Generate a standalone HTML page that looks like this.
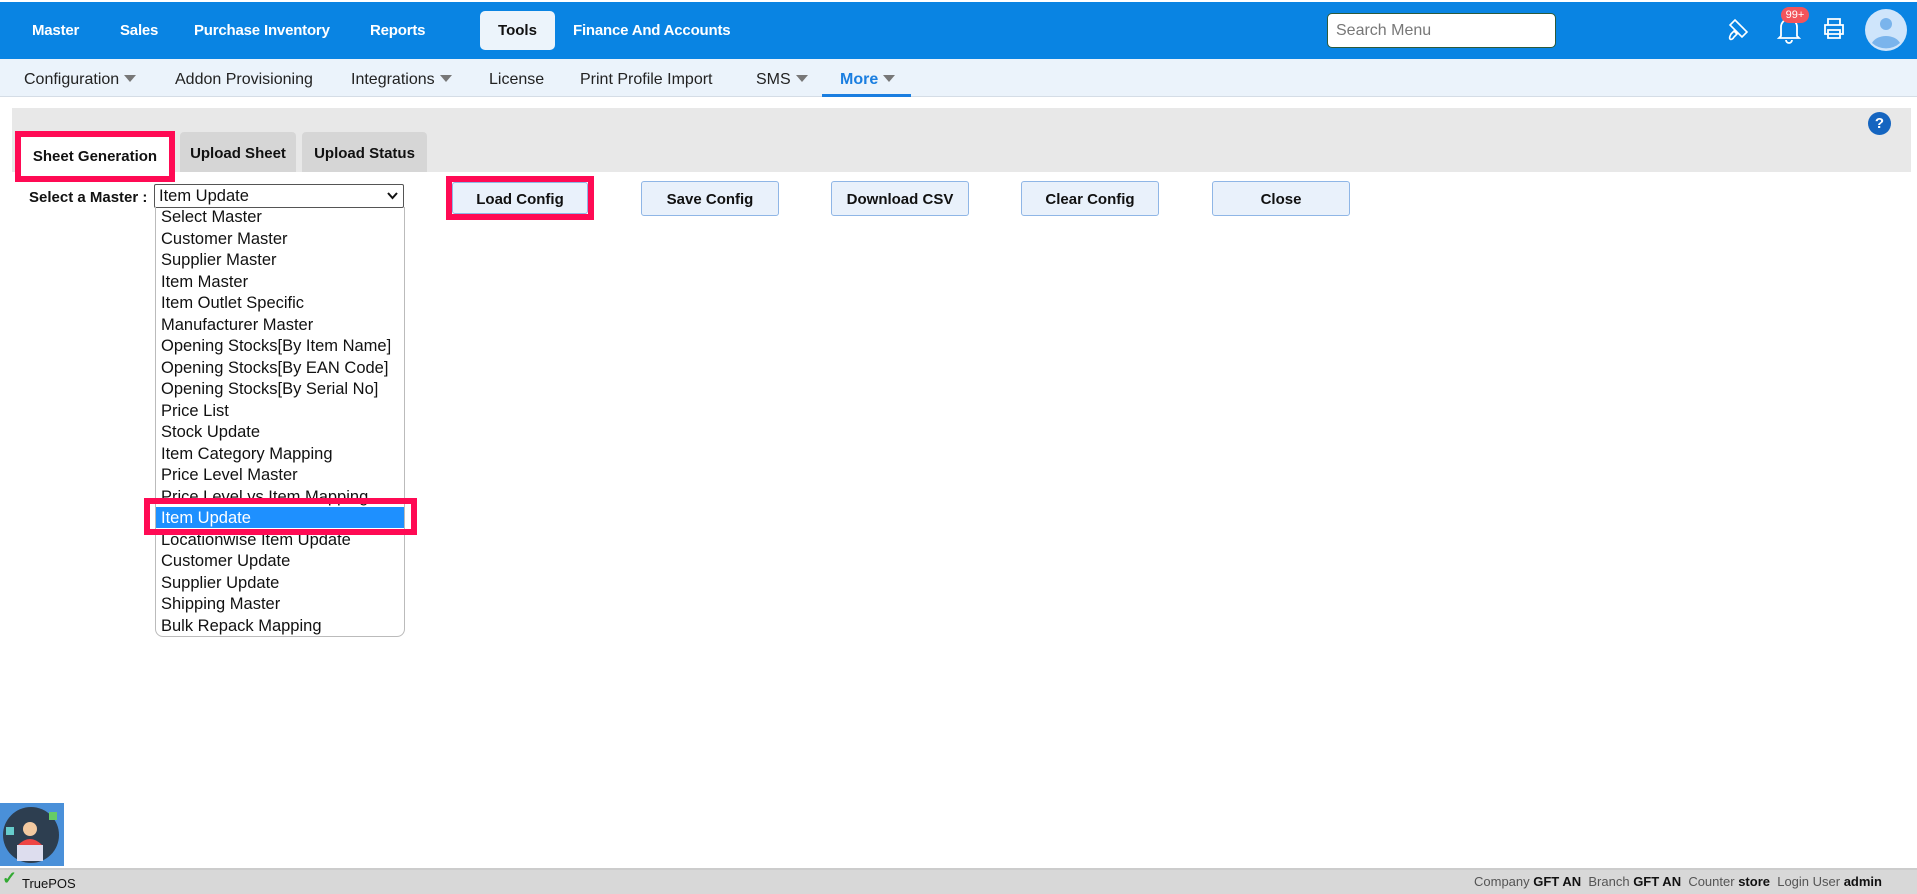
<!DOCTYPE html>
<html><head><meta charset="utf-8"><style>
*{box-sizing:border-box;margin:0;padding:0}
body{width:1917px;height:894px;position:relative;overflow:hidden;background:#fff;font-family:"Liberation Sans",sans-serif;color:#222}
.a{position:absolute}
.top{left:0;top:2px;width:1917px;height:57px;background:#0984e3}
.nav{top:22px;color:#fff;font-weight:bold;font-size:15px;letter-spacing:-0.2px}
.sub{left:0;top:59px;width:1917px;height:38px;background:#ebf3fb;border-bottom:1px solid #d5dde6}
.si{top:71px;font-size:16px;color:#222}
.car{display:inline-block;width:0;height:0;border-left:6px solid transparent;border-right:6px solid transparent;border-top:7px solid #777;margin-left:5px;vertical-align:2px}
.btn{height:35px;background:#e9f1fb;border:1px solid #8fb6e6;border-radius:3px;font-weight:bold;font-size:15px;text-align:center;line-height:35px;color:#111}
.pink{border:6px solid #ff0a54}
.li{left:161px;font-size:16.5px;color:#111;line-height:21.5px}
</style></head><body>
<div class="a top"></div>
<div class="a nav" style="left:32px">Master</div>
<div class="a nav" style="left:120px">Sales</div>
<div class="a nav" style="left:194px">Purchase</div>
<div class="a nav" style="left:264px">Inventory</div>
<div class="a nav" style="left:370px">Reports</div>
<div class="a" style="left:480px;top:11px;width:75px;height:39px;background:#ecf4fb;border-radius:5px;color:#111;font-weight:bold;font-size:15px;text-align:center;line-height:39px">Tools</div>
<div class="a nav" style="left:573px">Finance And Accounts</div>
<div class="a" style="left:1327px;top:13px;width:229px;height:35px;background:#fff;border:1px solid #2d5a3a;border-radius:5px;font-size:16px;color:#777;padding:8px 8px">Search Menu</div>
<svg class="a" style="left:1723px;top:14px" width="30" height="30" viewBox="0 0 30 30" fill="none" stroke="#fff" stroke-width="1.6"><path d="M12 6l12 12-5 5L7 11z M8 20l3-3 3 3-3 3c-1 2-3 3-4 2s0-3 1-5z M16 10l2 2 M19 13l2 2"/></svg>
<svg class="a" style="left:1775px;top:14px" width="28" height="30" viewBox="0 0 28 30" fill="none" stroke="#fff" stroke-width="1.8"><path d="M6 22V13a8 8 0 0 1 16 0v9l2 2H4z M11 26a3 3 0 0 0 6 0"/></svg>
<div class="a" style="left:1781px;top:7px;width:28px;height:16px;background:#f2545b;border-radius:8px;color:#fff;font-size:11px;text-align:center;line-height:16px">99+</div>
<svg class="a" style="left:1821px;top:16px" width="26" height="26" viewBox="0 0 26 26" fill="none" stroke="#fff" stroke-width="1.8"><path d="M7 9V3h12v6 M4 9h18v9H4z M7 14h12v8H7z"/></svg>
<svg class="a" style="left:1865px;top:9px" width="42" height="42" viewBox="0 0 42 42"><circle cx="21" cy="21" r="21" fill="#cfe5fb"/><circle cx="21" cy="15" r="6" fill="#7ab4ec"/><path d="M7 34a15 11 0 0 1 28 0a21 21 0 0 1-28 0z" fill="#7ab4ec"/></svg>
<div class="a sub"></div>
<div class="a si" style="left:24px">Configuration<span class="car"></span></div>
<div class="a si" style="left:175px">Addon Provisioning</div>
<div class="a si" style="left:351px">Integrations<span class="car"></span></div>
<div class="a si" style="left:489px">License</div>
<div class="a si" style="left:580px">Print Profile Import</div>
<div class="a si" style="left:756px">SMS<span class="car"></span></div>
<div class="a si" style="left:840px;color:#1a7ee0;font-weight:bold">More<span class="car"></span></div>
<div class="a" style="left:822px;top:94px;width:89px;height:3px;background:#1a7ee0"></div>
<div class="a" style="left:12px;top:108px;width:1899px;height:64px;background:#e8e8e8"></div>
<div class="a" style="left:1868px;top:112px;width:23px;height:23px;border-radius:50%;background:#1565c0;color:#fff;font-weight:bold;font-size:15px;text-align:center;line-height:23px">?</div>
<div class="a" style="left:180px;top:132px;width:116px;height:40px;background:#d6d6d6;border-radius:4px 4px 0 0;font-weight:bold;font-size:15px;text-align:center;line-height:44px;color:#111">Upload Sheet</div>
<div class="a" style="left:302px;top:132px;width:125px;height:40px;background:#d6d6d6;border-radius:4px 4px 0 0;font-weight:bold;font-size:15px;text-align:center;line-height:44px;color:#111">Upload Status</div>
<div class="a pink" style="left:15px;top:131px;width:160px;height:51px;background:#fff;font-weight:bold;font-size:15px;text-align:center;line-height:40px;color:#111">Sheet Generation</div>
<div class="a" style="left:29px;top:189px;font-weight:bold;font-size:15px;color:#111">Select a Master :</div>
<div class="a" style="left:154px;top:184px;width:250px;height:24px;border:1px solid #555;border-radius:2px;font-size:16.5px;padding:2px 4px;color:#111">Item Update<svg style="position:absolute;right:5px;top:7px" width="11" height="8" viewBox="0 0 11 8"><path d="M1 1l4.5 5L10 1" fill="none" stroke="#111" stroke-width="2"/></svg></div>
<div class="a pink" style="left:446px;top:176px;width:148px;height:44px"></div>
<div class="a btn" style="left:452px;top:182px;width:136px;height:32px;line-height:34px">Load Config</div>
<div class="a btn" style="left:641px;top:181px;width:138px">Save Config</div>
<div class="a btn" style="left:831px;top:181px;width:138px">Download CSV</div>
<div class="a btn" style="left:1021px;top:181px;width:138px">Clear Config</div>
<div class="a btn" style="left:1212px;top:181px;width:138px">Close</div>
<div class="a" style="left:155px;top:207px;width:250px;height:430px;border:1px solid #bbb;border-top:none;border-radius:0 0 8px 8px"></div>
<div class="a" style="left:156px;top:507px;width:248px;height:21px;background:#1e90ff"></div>
<div class="a li" style="top:207px">Select Master<br>Customer Master<br>Supplier Master<br>Item Master<br>Item Outlet Specific<br>Manufacturer Master<br>Opening Stocks[By Item Name]<br>Opening Stocks[By EAN Code]<br>Opening Stocks[By Serial No]<br>Price List<br>Stock Update<br>Item Category Mapping<br>Price Level Master<br>Price Level vs Item Mapping<br><span style="color:#fff">Item Update</span><br>Locationwise Item Update<br>Customer Update<br>Supplier Update<br>Shipping Master<br>Bulk Repack Mapping</div>
<div class="a pink" style="left:144px;top:498px;width:273px;height:37px;border-width:6px"></div>
<div class="a" style="left:0;top:803px;width:64px;height:63px;background:#4a90d9"><svg width="64" height="63"><circle cx="31" cy="32" r="28" fill="#2d3e50"/><rect x="17" y="42" width="26" height="16" fill="#dde"/><path d="M18 42q12-12 24 0" fill="#e44"/><circle cx="30" cy="26" r="7" fill="#f3c9a0"/><rect x="6" y="24" width="8" height="8" fill="#6cc"/><rect x="49" y="9" width="8" height="8" fill="#6c6"/></svg></div>
<div class="a" style="left:0;top:868px;width:1917px;height:26px;background:#d8d8d8;border-top:2px solid #ccc"></div>
<div class="a" style="left:2px;top:868px;color:#3a3;font-size:18px;font-weight:bold">✓</div>
<div class="a" style="left:22px;top:876px;font-size:13px;color:#111">TruePOS</div>
<div class="a" style="left:1474px;top:874px;font-size:13px;color:#555">Company <b style="color:#111">GFT AN</b>&nbsp; Branch <b style="color:#111">GFT AN</b>&nbsp; Counter <b style="color:#111">store</b>&nbsp; Login User <b style="color:#111">admin</b></div>
</body></html>
